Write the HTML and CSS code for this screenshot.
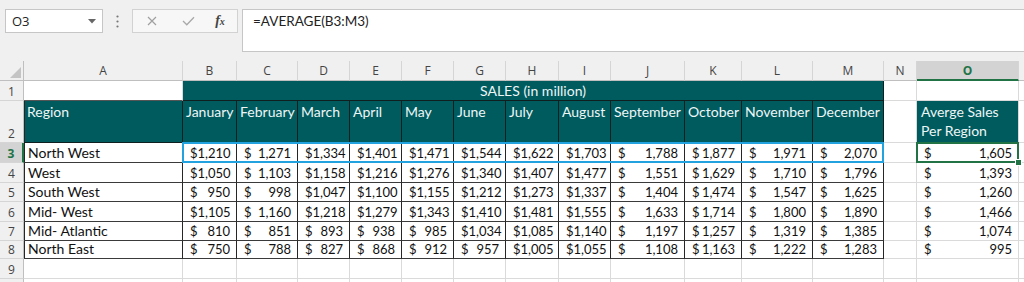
FILE: index.html
```html
<!DOCTYPE html>
<html lang="en">
<head>
    <meta charset="UTF-8">
    <title>Sales by Region</title>
    <link rel="stylesheet" href="styles.css">
</head>
<body>
    <div class="formula-bar">
        <div class="name-box">
            <span>O3</span>
            <svg width="8" height="5" viewBox="0 0 8 5"><path d="M0 0h8L4 4.5z" fill="#666"/></svg>
        </div>
        <div class="grip">
            <svg width="3" height="13" viewBox="0 0 3 13"><circle cx="1.5" cy="1.5" r="1.1" fill="#777"/><circle cx="1.5" cy="6.5" r="1.1" fill="#777"/><circle cx="1.5" cy="11.5" r="1.1" fill="#777"/></svg>
        </div>
        <div class="fx-buttons">
            <span class="slot"><svg width="10" height="10" viewBox="0 0 10 10"><path d="M1 1L9 9M9 1L1 9" stroke="#a0a0a0" stroke-width="1.2"/></svg></span>
            <span class="slot"><svg width="13" height="10" viewBox="0 0 13 10"><path d="M1 5l3.8 3.8L12 1.2" stroke="#a8a8a8" stroke-width="1.3" fill="none"/></svg></span>
            <span class="slot slot-fx"><span class="fx">f<small>x</small></span></span>
        </div>
        <div class="formula-input">=AVERAGE(B3:M3)</div>
    </div>

    <div class="sheet">
        <!-- column headers -->
        <div class="c corner"><svg width="11" height="11" viewBox="0 0 11 11"><path d="M11 0V11H0z" fill="#c4c4c4"/></svg></div>
        <div class="c ch">A</div>
        <div class="c ch">B</div>
        <div class="c ch">C</div>
        <div class="c ch">D</div>
        <div class="c ch">E</div>
        <div class="c ch">F</div>
        <div class="c ch">G</div>
        <div class="c ch">H</div>
        <div class="c ch">I</div>
        <div class="c ch">J</div>
        <div class="c ch">K</div>
        <div class="c ch">L</div>
        <div class="c ch">M</div>
        <div class="c ch">N</div>
        <div class="c ch sel">O</div>
        <div class="c ch"></div>

        <!-- row 1 -->
        <div class="c rh">1</div>
        <div class="c a1"></div>
        <div class="c t title">SALES (in million)</div>
        <div class="c"></div>
        <div class="c"></div>
        <div class="c"></div>

        <!-- row 2 -->
        <div class="c rh">2</div>
        <div class="c t hd first">Region</div>
        <div class="c t hd">January</div>
        <div class="c t hd">February</div>
        <div class="c t hd">March</div>
        <div class="c t hd">April</div>
        <div class="c t hd">May</div>
        <div class="c t hd">June</div>
        <div class="c t hd">July</div>
        <div class="c t hd">August</div>
        <div class="c t hd">September</div>
        <div class="c t hd">October</div>
        <div class="c t hd">November</div>
        <div class="c t hd">December</div>
        <div class="c"></div>
        <div class="c t hd avg">Averge Sales Per Region</div>
        <div class="c"></div>

        <!-- row 3 -->
        <div class="c rh sel">3</div>
        <div class="c b lbl first">North West</div>
        <div class="c b acc rng rng-l"><span>$</span><span>1,210</span></div>
        <div class="c b acc rng"><span>$</span><span>1,271</span></div>
        <div class="c b acc rng"><span>$</span><span>1,334</span></div>
        <div class="c b acc rng"><span>$</span><span>1,401</span></div>
        <div class="c b acc rng"><span>$</span><span>1,471</span></div>
        <div class="c b acc rng"><span>$</span><span>1,544</span></div>
        <div class="c b acc rng"><span>$</span><span>1,622</span></div>
        <div class="c b acc rng"><span>$</span><span>1,703</span></div>
        <div class="c b acc rng"><span>$</span><span>1,788</span></div>
        <div class="c b acc rng"><span>$</span><span>1,877</span></div>
        <div class="c b acc rng"><span>$</span><span>1,971</span></div>
        <div class="c b acc rng rng-r"><span>$</span><span>2,070</span></div>
        <div class="c"></div>
        <div class="c acc active"><span>$</span><span>1,605</span><i class="handle"></i></div>
        <div class="c"></div>

        <!-- row 4 -->
        <div class="c rh">4</div>
        <div class="c b lbl first">West</div>
        <div class="c b acc"><span>$</span><span>1,050</span></div>
        <div class="c b acc"><span>$</span><span>1,103</span></div>
        <div class="c b acc"><span>$</span><span>1,158</span></div>
        <div class="c b acc"><span>$</span><span>1,216</span></div>
        <div class="c b acc"><span>$</span><span>1,276</span></div>
        <div class="c b acc"><span>$</span><span>1,340</span></div>
        <div class="c b acc"><span>$</span><span>1,407</span></div>
        <div class="c b acc"><span>$</span><span>1,477</span></div>
        <div class="c b acc"><span>$</span><span>1,551</span></div>
        <div class="c b acc"><span>$</span><span>1,629</span></div>
        <div class="c b acc"><span>$</span><span>1,710</span></div>
        <div class="c b acc"><span>$</span><span>1,796</span></div>
        <div class="c"></div>
        <div class="c acc"><span>$</span><span>1,393</span></div>
        <div class="c"></div>

        <!-- row 5 -->
        <div class="c rh">5</div>
        <div class="c b lbl first">South West</div>
        <div class="c b acc"><span>$</span><span>950</span></div>
        <div class="c b acc"><span>$</span><span>998</span></div>
        <div class="c b acc"><span>$</span><span>1,047</span></div>
        <div class="c b acc"><span>$</span><span>1,100</span></div>
        <div class="c b acc"><span>$</span><span>1,155</span></div>
        <div class="c b acc"><span>$</span><span>1,212</span></div>
        <div class="c b acc"><span>$</span><span>1,273</span></div>
        <div class="c b acc"><span>$</span><span>1,337</span></div>
        <div class="c b acc"><span>$</span><span>1,404</span></div>
        <div class="c b acc"><span>$</span><span>1,474</span></div>
        <div class="c b acc"><span>$</span><span>1,547</span></div>
        <div class="c b acc"><span>$</span><span>1,625</span></div>
        <div class="c"></div>
        <div class="c acc"><span>$</span><span>1,260</span></div>
        <div class="c"></div>

        <!-- row 6 -->
        <div class="c rh">6</div>
        <div class="c b lbl first">Mid- West</div>
        <div class="c b acc"><span>$</span><span>1,105</span></div>
        <div class="c b acc"><span>$</span><span>1,160</span></div>
        <div class="c b acc"><span>$</span><span>1,218</span></div>
        <div class="c b acc"><span>$</span><span>1,279</span></div>
        <div class="c b acc"><span>$</span><span>1,343</span></div>
        <div class="c b acc"><span>$</span><span>1,410</span></div>
        <div class="c b acc"><span>$</span><span>1,481</span></div>
        <div class="c b acc"><span>$</span><span>1,555</span></div>
        <div class="c b acc"><span>$</span><span>1,633</span></div>
        <div class="c b acc"><span>$</span><span>1,714</span></div>
        <div class="c b acc"><span>$</span><span>1,800</span></div>
        <div class="c b acc"><span>$</span><span>1,890</span></div>
        <div class="c"></div>
        <div class="c acc"><span>$</span><span>1,466</span></div>
        <div class="c"></div>

        <!-- row 7 -->
        <div class="c rh">7</div>
        <div class="c b lbl first">Mid- Atlantic</div>
        <div class="c b acc"><span>$</span><span>810</span></div>
        <div class="c b acc"><span>$</span><span>851</span></div>
        <div class="c b acc"><span>$</span><span>893</span></div>
        <div class="c b acc"><span>$</span><span>938</span></div>
        <div class="c b acc"><span>$</span><span>985</span></div>
        <div class="c b acc"><span>$</span><span>1,034</span></div>
        <div class="c b acc"><span>$</span><span>1,085</span></div>
        <div class="c b acc"><span>$</span><span>1,140</span></div>
        <div class="c b acc"><span>$</span><span>1,197</span></div>
        <div class="c b acc"><span>$</span><span>1,257</span></div>
        <div class="c b acc"><span>$</span><span>1,319</span></div>
        <div class="c b acc"><span>$</span><span>1,385</span></div>
        <div class="c"></div>
        <div class="c acc"><span>$</span><span>1,074</span></div>
        <div class="c"></div>

        <!-- row 8 -->
        <div class="c rh">8</div>
        <div class="c b lbl first">North East</div>
        <div class="c b acc"><span>$</span><span>750</span></div>
        <div class="c b acc"><span>$</span><span>788</span></div>
        <div class="c b acc"><span>$</span><span>827</span></div>
        <div class="c b acc"><span>$</span><span>868</span></div>
        <div class="c b acc"><span>$</span><span>912</span></div>
        <div class="c b acc"><span>$</span><span>957</span></div>
        <div class="c b acc"><span>$</span><span>1,005</span></div>
        <div class="c b acc"><span>$</span><span>1,055</span></div>
        <div class="c b acc"><span>$</span><span>1,108</span></div>
        <div class="c b acc"><span>$</span><span>1,163</span></div>
        <div class="c b acc"><span>$</span><span>1,222</span></div>
        <div class="c b acc"><span>$</span><span>1,283</span></div>
        <div class="c"></div>
        <div class="c acc"><span>$</span><span>995</span></div>
        <div class="c"></div>

        <!-- row 9 -->
        <div class="c rh">9</div>
        <div class="c"></div><div class="c"></div><div class="c"></div><div class="c"></div>
        <div class="c"></div><div class="c"></div><div class="c"></div><div class="c"></div>
        <div class="c"></div><div class="c"></div><div class="c"></div><div class="c"></div>
        <div class="c"></div><div class="c"></div><div class="c"></div><div class="c"></div>

        <!-- row 10, only its top edge is in view -->
        <div class="c rh"></div>
        <div class="c"></div><div class="c"></div><div class="c"></div><div class="c"></div>
        <div class="c"></div><div class="c"></div><div class="c"></div><div class="c"></div>
        <div class="c"></div><div class="c"></div><div class="c"></div><div class="c"></div>
        <div class="c"></div><div class="c"></div><div class="c"></div><div class="c"></div>
    </div>
</body>
</html>
```

FILE: styles.css
```css
body {
    margin: 0;
    background: #f0f0f0;
    font-family: Lato, "Liberation Sans", sans-serif;
    overflow: hidden;
}

/* formula bar */
.formula-bar {
    display: flex;
    align-items: flex-start;
    height: 52px;
    padding: 9px 0 0 5px;
    box-sizing: border-box;
}
.name-box {
    width: 98px;
    height: 24px;
    box-sizing: border-box;
    background: #fff;
    border: 1px solid #c6c6c6;
    display: flex;
    align-items: center;
    justify-content: space-between;
    padding: 0 6px;
    font: 13px "Open Sans", sans-serif;
    color: #222;
}
.grip {
    width: 29px;
    height: 24px;
    display: flex;
    align-items: center;
    justify-content: center;
}
.fx-buttons {
    width: 106px;
    height: 24px;
    box-sizing: border-box;
    border: 1px solid #d2d2d2;
    background: #f7f7f7;
    display: flex;
    align-items: center;
    padding-left: 1px;
}
.slot {
    width: 36px;
    display: flex;
    justify-content: center;
    align-items: center;
}
.slot-fx {
    width: 28px;
}
.fx {
    font: italic bold 14px "Liberation Serif", serif;
    color: #444;
}
.fx small {
    font-size: 10px;
}
.formula-input {
    flex: 1;
    height: 43px;
    margin-left: 4px;
    box-sizing: border-box;
    background: #fff;
    border: 1px solid #c6c6c6;
    border-right: none;
    padding: 3px 10px;
    font-size: 13.5px;
    color: #222;
}

/* sheet grid */
.sheet {
    margin-top: 9px;
    display: grid;
    grid-template-columns: 24px 159px 54px 61px 52px 52px 52px 52px 53px 52px 74px 57px 71px 71px 33px 102px 1fr;
    grid-template-rows: 20px 20px 42px 20px 20px 19px 20px 19px 18px 20px 20px;
}
.c {
    box-sizing: border-box;
    border-right: 1px solid #dadada;
    border-bottom: 1px solid #dadada;
    background: #fff;
    display: flex;
    align-items: flex-end;
    padding: 0 3px 1px;
    font-size: 14px;
    line-height: 16px;
    color: #111;
    white-space: nowrap;
    overflow: hidden;
}
.corner {
    background: #f0f0f0;
    border-right-color: #bfbfbf;
    border-bottom-color: #bfbfbf;
    justify-content: flex-end;
    padding: 0 2px 2px 0;
}
.ch {
    background: #f0f0f0;
    border-right-color: #d5d5d5;
    border-bottom-color: #bfbfbf;
    justify-content: center;
    align-items: center;
    padding: 0;
    font: 12px "Open Sans", sans-serif;
    color: #444;
}
.ch.sel {
    background: #d3d3d3;
    color: #217346;
    font-weight: bold;
    border-bottom: 2px solid #217346;
}
.rh {
    background: #f0f0f0;
    border-right-color: #bfbfbf;
    border-bottom-color: #d5d5d5;
    justify-content: center;
    padding: 0 0 1px;
    font: 12px/15px "Open Sans", sans-serif;
    color: #444;
}
.rh.sel {
    background: #d3d3d3;
    color: #217346;
    font-weight: bold;
    border-right: 2px solid #217346;
}

/* table styling */
.a1 {
    border-bottom-color: #555;
}
.t {
    background: #005b5f;
    color: #eef6f6;
    border-right-color: #0f1e1f;
    border-bottom-color: #0f1e1f;
}
.title {
    grid-column: span 12;
    justify-content: center;
    align-items: center;
    padding: 0;
}
.hd {
    align-items: flex-start;
    padding-top: 3px;
}
.avg {
    white-space: normal;
    line-height: 19px;
    padding: 1px 4px 0;
    border-right-color: #dadada;
    border-bottom-color: #005b5f;
}
.b {
    border-right-color: #262626;
    border-bottom-color: #3a3a3a;
}
.first {
    box-shadow: inset 1px 0 #262626;
}
.lbl {
    padding-left: 4px;
}
.acc {
    justify-content: space-between;
    padding: 0 6px 1px 7px;
    font-size: 13px;
}

/* formula range + active cell */
.rng {
    position: relative;
    overflow: visible;
}
.rng::after {
    content: "";
    position: absolute;
    left: -1px;
    right: -1px;
    top: -1px;
    bottom: -1px;
    border-top: 2px solid #22a2de;
    border-bottom: 2px solid #22a2de;
}
.rng-l::after {
    border-left: 2px solid #22a2de;
}
.rng-r::after {
    border-right: 2px solid #22a2de;
}
.active {
    position: relative;
    overflow: visible;
}
.active::after {
    content: "";
    position: absolute;
    left: -1px;
    right: -1px;
    top: -1px;
    bottom: -1px;
    border: 2px solid #217346;
}
.handle {
    position: absolute;
    right: -4px;
    bottom: -4px;
    width: 5px;
    height: 5px;
    background: #217346;
    border: 1px solid #fff;
    z-index: 2;
}
```
